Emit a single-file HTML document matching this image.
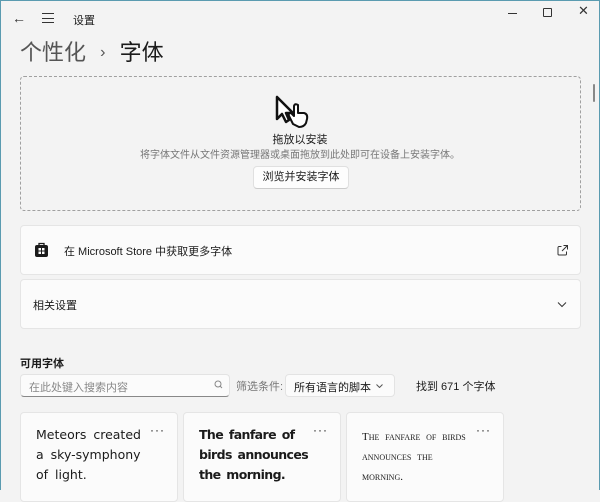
<!DOCTYPE html>
<html><head><meta charset="utf-8"><style>
*{box-sizing:border-box;margin:0;padding:0}
body{width:600px;height:490px;overflow:hidden;background:#f3f3f3;font-family:"Liberation Sans","Noto Sans CJK SC",sans-serif;color:#1b1b1b;position:relative}
.frame{position:absolute;inset:0;border:1px solid #5a9bb0;border-bottom:none;pointer-events:none}
.abs{position:absolute}
.card{position:absolute;background:#fbfbfb;border:1px solid #e5e5e5;border-radius:4px}
.fc{position:absolute;top:412px;width:158px;height:90px;background:#fbfbfb;border:1px solid #e5e5e5;border-radius:4px}
.fc .t{position:absolute;left:15px;top:12px;font-size:14px;line-height:20px;width:110px;word-spacing:3px}
.fc .d{position:absolute;right:12px;top:10px;font-size:12px;letter-spacing:1px}
</style></head><body>
<div class="frame"></div>
<div class="abs" style="left:12px;top:10px;font-size:14px;color:#333">&#8592;</div>
<div class="abs" style="left:42px;top:13px;width:12px;height:10px;border-top:1px solid #333;border-bottom:1px solid #333"><div style="margin-top:4px;border-top:1px solid #333"></div></div>
<div class="abs" style="left:73px;top:12px;font-size:11px">设置</div>
<div class="abs" style="left:508px;top:13px;width:9px;border-top:1px solid #333"></div>
<div class="abs" style="left:543px;top:8px;width:9px;height:9px;border:1px solid #333;border-radius:1px"></div>
<div class="abs" style="left:578px;top:3px;font-size:13px;color:#333">✕</div>
<div class="abs" style="left:20px;top:35px;font-size:22px;color:#555">个性化 <span style="font-size:16px;margin:0 8px;vertical-align:3px">›</span> <span style="color:#1b1b1b">字体</span></div>
<div class="abs" style="left:593px;top:84px;width:2px;height:18px;background:#888;border-radius:1px"></div>
<div class="abs" style="left:20px;top:76px;width:561px;height:135px;border:1px dashed #a0a0a0;border-radius:4px"></div>
<svg class="abs" style="left:272px;top:94px" width="46" height="36" viewBox="0 0 46 36"><path d="M5 3 L5 25 L10 20 L14 28 L17 26 L14 19 L21 19 Z" fill="#fff" stroke="#111" stroke-width="2.5" stroke-linejoin="round"/><path d="M21 30 L17 22 Q16 19 19 19 L22 22 L22 12 Q23 9 26 11 L26 19 L32 19 Q36 20 35 25 L34 29 Q32 33 27 33 Z" fill="#fff" stroke="#111" stroke-width="2" stroke-linejoin="round"/></svg>
<div class="abs" style="left:0;width:600px;text-align:center;top:131px;font-size:11px">拖放以安装</div>
<div class="abs" style="left:0;width:600px;text-align:center;top:146px;font-size:10px;color:#777">将字体文件从文件资源管理器或桌面拖放到此处即可在设备上安装字体。</div>
<div class="abs" style="left:253px;top:166px;width:96px;height:23px;background:#fdfdfd;border:1px solid #e0e0e0;border-bottom-color:#ccc;border-radius:4px;font-size:11px;text-align:center;line-height:21px">浏览并安装字体</div>
<div class="card" style="left:20px;top:225px;width:561px;height:50px"></div>
<svg class="abs" style="left:35px;top:242px" width="13" height="15" viewBox="0 0 13 15"><path d="M4 3V1.5h5V3" fill="none" stroke="#1b1b1b" stroke-width="1.3"/><rect x="0" y="3" width="13" height="12" rx="2" fill="#1b1b1b"/><rect x="3.5" y="6" width="2.5" height="2.5" fill="#fff"/><rect x="7" y="6" width="2.5" height="2.5" fill="#fff"/><rect x="3.5" y="9.5" width="2.5" height="2.5" fill="#fff"/><rect x="7" y="9.5" width="2.5" height="2.5" fill="#fff"/></svg>
<div class="abs" style="left:64px;top:243px;font-size:11px">在 Microsoft Store 中获取更多字体</div>
<svg class="abs" style="left:557px;top:245px" width="11" height="11" viewBox="0 0 11 11" fill="none" stroke="#333"><path d="M4.5 1.5H2a1 1 0 0 0-1 1V9a1 1 0 0 0 1 1h6.5a1 1 0 0 0 1-1V6.5M6.5 .5h4v4M10.5 .5 5 6"/></svg>
<div class="card" style="left:20px;top:279px;width:561px;height:50px"></div>
<div class="abs" style="left:33px;top:297px;font-size:11px">相关设置</div>
<svg class="abs" style="left:557px;top:302px" width="10" height="6" viewBox="0 0 10 6" fill="none" stroke="#333"><path d="M1 .5l4 4 4-4"/></svg>
<div class="abs" style="left:20px;top:355px;font-size:11px;font-weight:bold">可用字体</div>
<div class="abs" style="left:20px;top:374px;width:210px;height:23px;background:#fbfbfb;border:1px solid #e3e3e3;border-bottom:1px solid #888;border-radius:4px;font-size:11px;color:#888;padding:4px 0 0 8px">在此处键入搜索内容</div>
<svg class="abs" style="left:214px;top:380px" width="9" height="9" viewBox="0 0 9 9" fill="none" stroke="#888"><circle cx="4" cy="4" r="3"/><path d="M6 6L8 8"/></svg>
<div class="abs" style="left:236px;top:378px;font-size:11px;color:#777">筛选条件:</div>
<div class="abs" style="left:285px;top:374px;width:110px;height:23px;background:#fbfbfb;border:1px solid #e3e3e3;border-radius:4px;font-size:11px;padding:4px 0 0 8px">所有语言的脚本</div>
<svg class="abs" style="left:376px;top:384px" width="7" height="4" viewBox="0 0 7 4" fill="none" stroke="#555"><path d="M.5 .5l3 3 3-3"/></svg>
<div class="abs" style="left:416px;top:378px;font-size:11px">找到 671 个字体</div>
<div class="fc" style="left:20px"><div class="t" style="font-family:'DejaVu Sans',sans-serif;font-size:12.5px;width:115px">Meteors created a sky-symphony of light.</div><div class="d">···</div></div>
<div class="fc" style="left:183px"><div class="t" style="font-weight:bold;font-family:'DejaVu Sans',sans-serif;font-size:12.5px;letter-spacing:-0.6px;word-spacing:2px;width:125px">The fanfare of birds announces the morning.</div><div class="d">···</div></div>
<div class="fc" style="left:346px"><div class="t" style="font-family:'Liberation Serif',serif;font-size:11px;font-variant:small-caps;width:130px;line-height:20px;top:14px">The fanfare of birds<br>announces the<br>morning.</div><div class="d">···</div></div>
</body></html>
